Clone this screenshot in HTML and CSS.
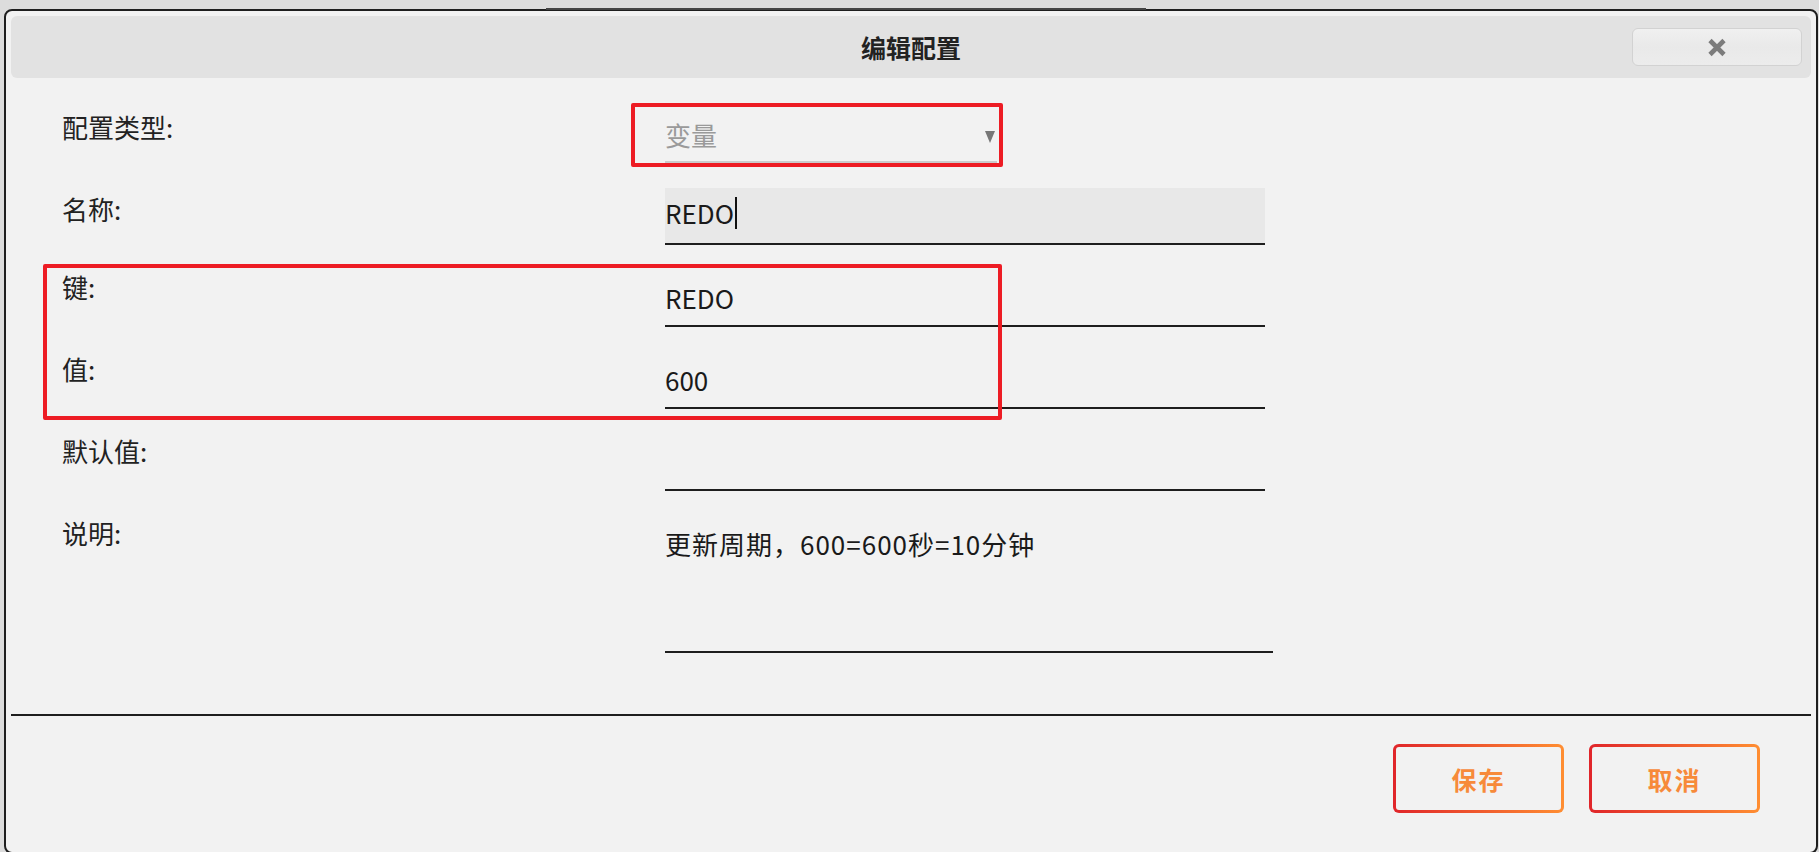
FILE: index.html
```html
<!DOCTYPE html>
<html lang="zh-CN">
<head>
    <meta charset="UTF-8">
    <meta name="viewport" content="width=device-width, initial-scale=1.0">
    <title>编辑配置</title>
    <link rel="stylesheet" href="styles.css">
</head>
<body>

<!-- 编辑配置弹窗 -->
<div class="dialog">
    <div class="dialog-header">
        <span></span>
        <h1 class="dialog-title">编辑配置</h1>
        <button class="close-btn" type="button" aria-label="关闭">
            <svg width="20" height="19" viewBox="0 0 20 19">
                <path d="M3 2.5 L17 16.5 M17 2.5 L3 16.5" stroke="#7c7c7c" stroke-width="4.6" fill="none"/>
            </svg>
        </button>
    </div>

    <!-- 表单区域 -->
    <form class="config-form">
        <div class="field-row">
            <label class="field-label">配置类型:</label>
            <div class="field-select">
                <span>变量</span>
                <i class="select-arrow"></i>
            </div>
        </div>

        <div class="field-row">
            <label class="field-label">名称:</label>
            <div class="field-input focused">REDO<span class="caret"></span></div>
        </div>

        <div class="field-row">
            <label class="field-label tight">键:</label>
            <div class="field-input">REDO</div>
        </div>

        <div class="field-row">
            <label class="field-label tight">值:</label>
            <div class="field-input">600</div>
        </div>

        <div class="field-row">
            <label class="field-label tight">默认值:</label>
            <div class="field-input"></div>
        </div>

        <div class="field-row">
            <label class="field-label tight">说明:</label>
            <div class="field-input field-textarea">更新周期，600=600秒=10分钟</div>
        </div>

        <!-- 标注框 -->
        <div class="mark mark-type"></div>
        <div class="mark mark-kv"></div>
    </form>

    <div class="dialog-footer">
        <button class="action-btn" type="button">保存</button>
        <button class="action-btn" type="button">取消</button>
    </div>
</div>

</body>
</html>
```

FILE: styles.css
```css
/* 页面整体 */
body {
    margin: 0;
    background-color: #dcdcdc;
    font-family: "Noto Sans CJK SC", "Noto Sans", sans-serif;
    color: #222;
    overflow: hidden;
}

/* 弹窗外框 */
.dialog {
    position: relative;
    box-sizing: border-box;
    height: 845px;
    margin: 9px 1px 0 4px;
    padding: 5px 5px 0 5px;
    border: 2px solid #1e1e1e;
    border-radius: 8px;
    background-color: #f2f2f2;
}

/* 顶部后面窗口露出的那条线 */
.dialog::before {
    content: "";
    position: absolute;
    top: -3px;
    left: 540px;
    width: 600px;
    height: 2px;
    background-color: #444;
}

/* 标题栏 */
.dialog-header {
    display: grid;
    grid-template-columns: 1fr auto 1fr;
    align-items: center;
    height: 62px;
    background-color: #e2e2e2;
    border-radius: 6px;
}

.dialog-title {
    margin: 0;
    font-size: 25px;
    font-weight: 700;
    color: #222;
}

/* 关闭按钮 */
.close-btn {
    justify-self: end;
    display: flex;
    align-items: center;
    justify-content: center;
    width: 170px;
    height: 38px;
    margin-right: 9px;
    padding: 0;
    border: 1px solid #d2d2d2;
    border-radius: 6px;
    background: linear-gradient(#f0f0f0, #e9e9e9 50%, #ececec);
}

/* 表单 */
.config-form {
    position: relative;
    padding: 28px 0 0 51px;
    height: 608px;
}

.field-row {
    display: flex;
    align-items: flex-start;
    height: 57px;
    margin-bottom: 25px;
}

.field-label {
    width: 603px;
    font-size: 26px;
    line-height: 42px;
    color: #222;
}

.field-label.tight {
    line-height: 34px;
}

.field-input {
    box-sizing: border-box;
    width: 600px;
    height: 57px;
    padding: 12px 0 0 0;
    font-size: 26px;
    line-height: 32px;
    color: #1a1a1a;
    border-bottom: 2px solid #1e1e1e;
}

.field-input.focused {
    background-color: #e8e8e8;
    padding-top: 9px;
}

.caret {
    display: inline-block;
    width: 2px;
    height: 32px;
    margin-left: 1px;
    vertical-align: top;
    background-color: #111;
}

.field-textarea {
    width: 608px;
    height: 137px;
    letter-spacing: 1px;
}

/* 下拉框 */
.field-select {
    box-sizing: border-box;
    display: flex;
    align-items: flex-start;
    justify-content: space-between;
    width: 332px;
    height: 57px;
    padding: 12px 2px 0 0;
    font-size: 26px;
    line-height: 34px;
    color: #9a9a9a;
    border-bottom: 2px solid #cbcbcb;
}

.select-arrow {
    width: 0;
    height: 0;
    margin-top: 13px;
    border-left: 5px solid transparent;
    border-right: 5px solid transparent;
    border-top: 12px solid #777;
}

/* 红色标注框 */
.mark {
    position: absolute;
    border: 4px solid #ed1c24;
    border-radius: 2px;
}

.mark-type {
    top: 25px;
    left: 620px;
    width: 364px;
    height: 56px;
}

.mark-kv {
    top: 186px;
    left: 32px;
    width: 951px;
    height: 148px;
}

/* 底部按钮区 */
.dialog-footer {
    display: flex;
    justify-content: flex-end;
    gap: 25px;
    padding: 28px 51px 0 0;
    border-top: 2px solid #1e1e1e;
}

.action-btn {
    width: 171px;
    height: 69px;
    font-family: "Noto Sans CJK SC", sans-serif;
    font-size: 25px;
    font-weight: 700;
    letter-spacing: 2px;
    color: #f78a3a;
    border: 3px solid transparent;
    border-radius: 6px;
    background: linear-gradient(#f2f2f2, #f2f2f2) padding-box,
                linear-gradient(90deg, #e0252a, #ff8e32) border-box;
    cursor: pointer;
}
```
